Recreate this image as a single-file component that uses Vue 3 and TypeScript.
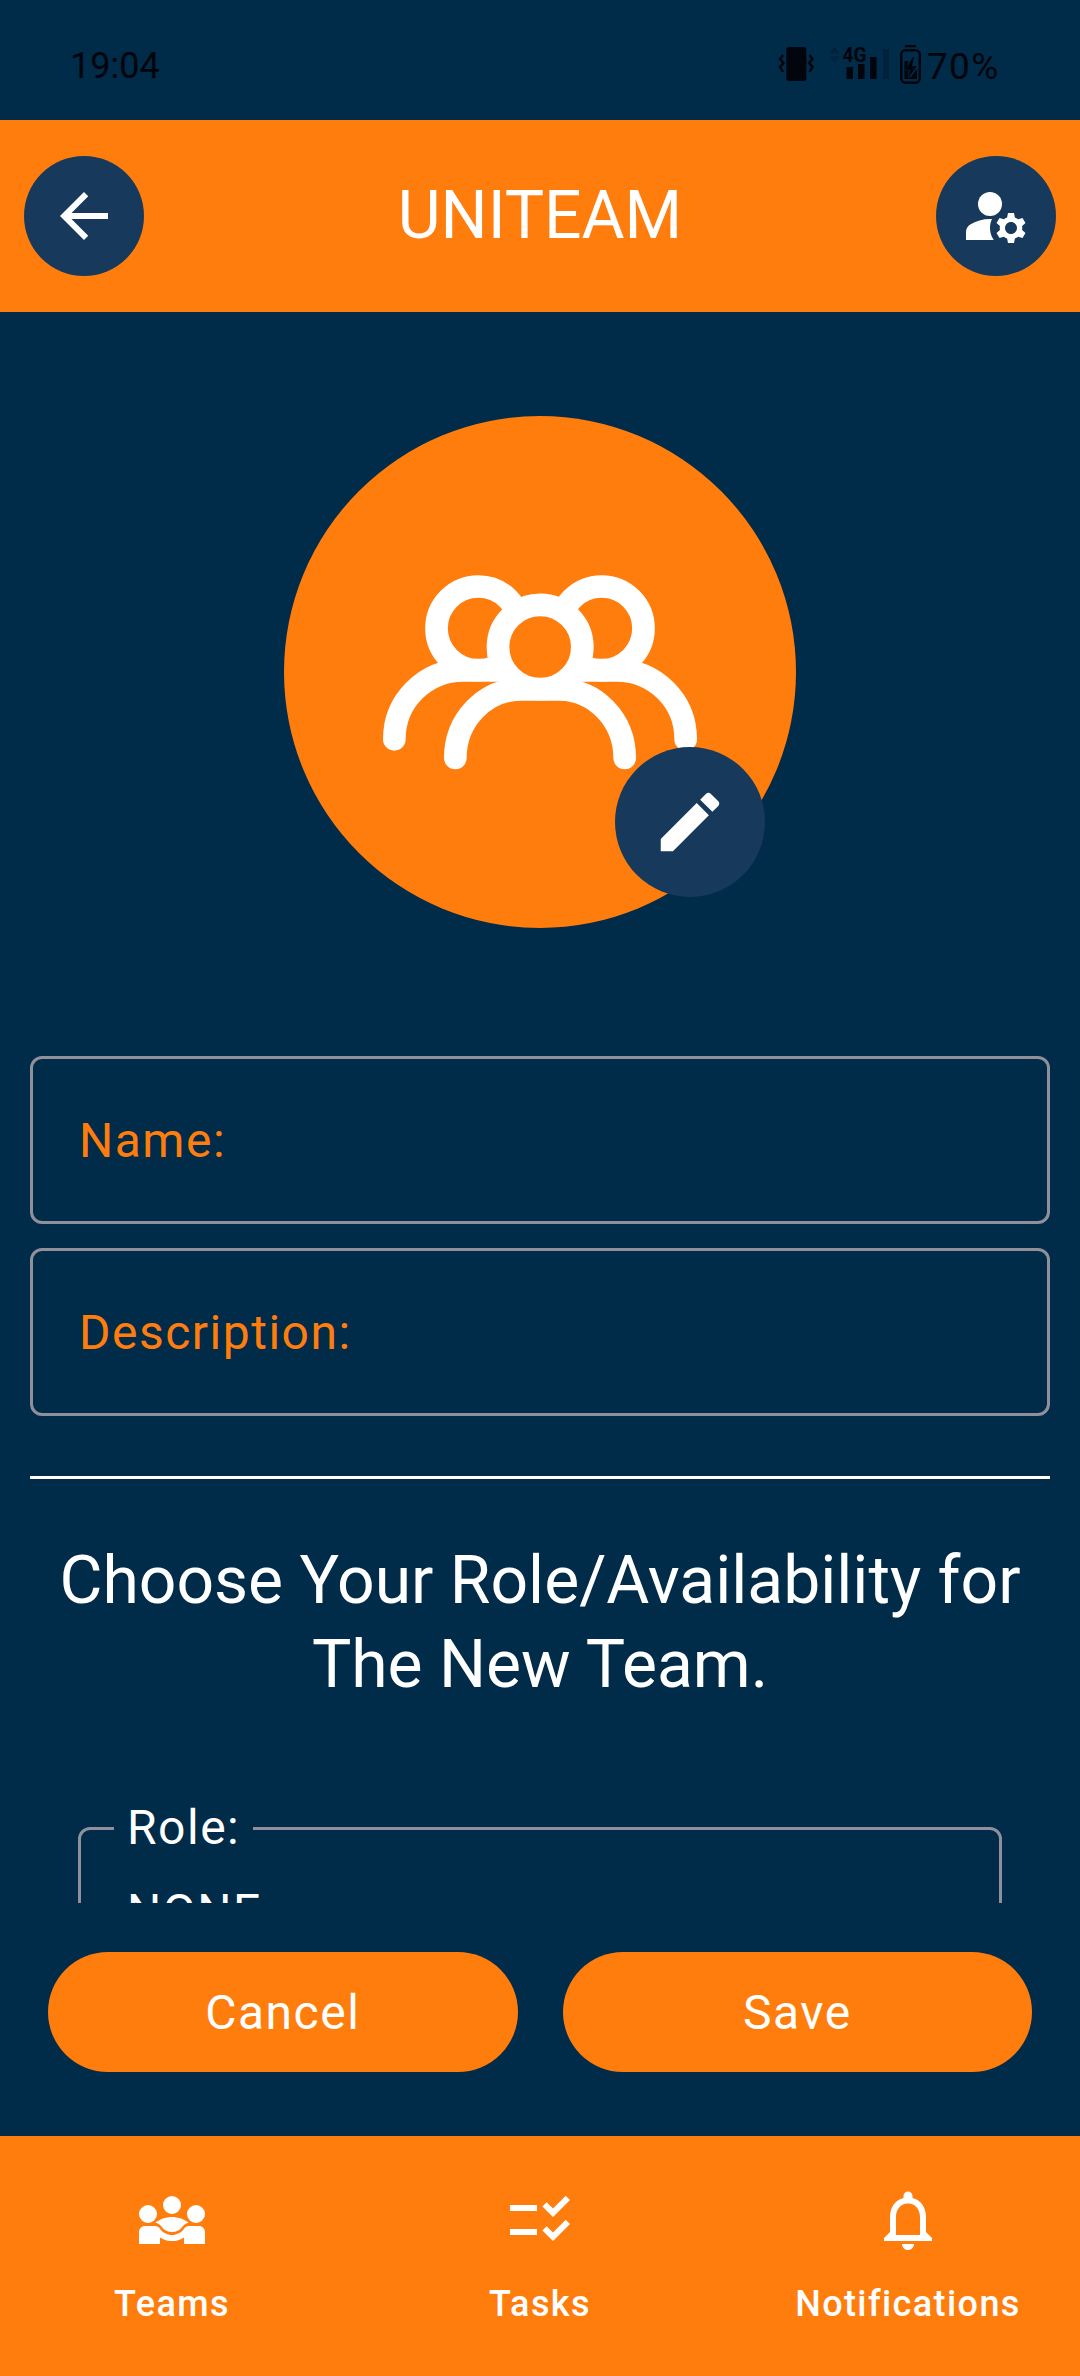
<script setup lang="ts">
interface NavItem {
  label: string
  paths: string[]
}

const fields: string[] = ['Name:', 'Description:']

const navItems: NavItem[] = [
  {
    label: 'Teams',
    paths: [
      'M12 4a3 3 0 1 0 0 6a3 3 0 1 0 0-6z',
      'M4 7a3 3 0 1 0 0 6a3 3 0 1 0 0-6z',
      'M20 7a3 3 0 1 0 0 6a3 3 0 1 0 0-6z',
      'M6.4 12.9C7.9 11.8 9.9 11 12 11s4.1.8 5.6 1.9c-1 .2-1.7.7-2.2 1.4C14.6 15.4 13.4 16 12 16s-2.6-.6-3.4-1.7C8.1 13.6 7.4 13.1 6.4 12.9z',
      'M1 20v-4c0-1.1.9-2 2-2h3.3c.7 0 1.3.3 1.7.9C8.9 16.2 10.4 17 12 17s3.1-.8 4-2.1c.4-.6 1-.9 1.7-.9H21c1.1 0 2 .9 2 2v4h-7v-2.2c-1.2.8-2.6 1.2-4 1.2s-2.8-.4-4-1.2V20z',
    ],
  },
  {
    label: 'Tasks',
    paths: [
      'M11 7H2v2h9V7zM11 15H2v2h9v-2zM16.34 11l-3.54-3.54 1.41-1.41 2.12 2.12 4.24-4.24L22 5.34 16.34 11zM16.34 19l-3.54-3.54 1.41-1.41 2.12 2.12 4.24-4.24L22 13.34 16.34 19z',
    ],
  },
  {
    label: 'Notifications',
    paths: [
      'M12 22c1.1 0 2-.9 2-2h-4c0 1.1.9 2 2 2zm6-6v-5c0-3.07-1.63-5.64-4.5-6.32V4c0-.83-.67-1.5-1.5-1.5s-1.5.67-1.5 1.5v.68C7.64 5.36 6 7.92 6 11v5l-2 2v1h16v-1l-2-2zm-2 1H8v-6c0-2.48 1.51-4.5 4-4.5s4 2.02 4 4.5v6z',
    ],
  },
]
</script>

<template>
  <div class="screen">
    <div class="status">
      <span class="time">19:04</span>
      <svg class="indicators" width="150" height="48" viewBox="776 42 150 48">
        <rect x="786.3" y="47" width="20" height="34" rx="3" />
        <path class="line" d="M783 55l-3 4 3.5 4-3.5 4 3 5M809.5 55l3 4-3.5 4 3.5 4-3 5" />
        <path class="faint" d="M834.5 47l5 6.5h-10zM834.5 63l5-6.5h-10zM883 49h6v30h-6z" />
        <text x="842.5" y="62" textLength="24" lengthAdjust="spacingAndGlyphs">4G</text>
        <path d="M846.5 67h6.5v12h-6.5zM858 64h6.5v15H858zM870 57h6.5v22H870zM905 45h11v2.2h-11z" />
        <rect class="line" x="901.2" y="50.2" width="18.6" height="32.6" rx="4.5" />
        <path d="M904.5 61h4l-3 9.5h3.500l-1 3 2 4.500 7-9V79h-12.500zM913 57l-8 13h5l-2 8 9-12h-5l2-9z" />
      </svg>
      <span class="battery">70%</span>
    </div>

    <header class="topbar">
      <button class="round" aria-label="Back">
        <svg width="72" height="72" viewBox="0 0 24 24"><path d="M20 11H7.83l5.59-5.59L12 4l-8 8 8 8 1.41-1.41L7.83 13H20v-2z" /></svg>
      </button>
      <h1>UNITEAM</h1>
      <button class="round" aria-label="Account settings">
        <svg width="72" height="72" viewBox="0 0 24 24">
          <circle cx="10" cy="8" r="4" />
          <path d="M10.67 13.02C10.45 13.01 10.23 13 10 13c-2.42 0-4.68.67-6.61 1.82C2.51 15.34 2 16.32 2 17.35V20h9.26C10.47 18.87 10 17.49 10 16c0-1.07.25-2.07.67-2.98z" />
          <path d="M20.75 16c0-.22-.03-.42-.06-.63l1.14-1.01-1-1.73-1.45.49c-.32-.27-.68-.48-1.08-.63L18 11h-2l-.3 1.49c-.4.15-.76.36-1.08.63l-1.45-.49-1 1.73 1.14 1.01c-.03.21-.06.41-.06.63s.03.42.06.63l-1.14 1.01 1 1.73 1.45-.49c.32.27.68.48 1.08.63L16 21h2l.3-1.49c.4-.15.76-.36 1.08-.63l1.45.49 1-1.73-1.14-1.01c.03-.21.06-.41.06-.63zM17 18c-1.1 0-2-.9-2-2s.9-2 2-2 2 .9 2 2-.9 2-2 2z" />
        </svg>
      </button>
    </header>

    <main class="content">
      <div class="avatar">
        <svg width="360" height="260" viewBox="0 0 1080 780" class="people">
          <circle cx="355" cy="265" r="125.5" />
          <circle cx="725" cy="265" r="125.5" />
          <path d="M103 598C103 482 196 391 310 391H440M977 598C977 482 884 391 770 391H640" />
          <circle class="front" cx="540.5" cy="321" r="126.5" />
          <path d="M286 654C286 540 374 450 480 448H600C706 450 794 540 794 654" />
        </svg>
        <button class="edit" aria-label="Edit picture">
          <svg width="78" height="78" viewBox="0 0 24 24"><path d="M3 17.25V21h3.75L17.81 9.94l-3.75-3.75L3 17.25zM20.71 7.04c.39-.39.39-1.02 0-1.41l-2.34-2.34c-.39-.39-1.02-.39-1.41 0l-1.83 1.83 3.75 3.75 1.83-1.83z" /></svg>
        </button>
      </div>

      <div v-for="field in fields" :key="field" class="field">{{ field }}</div>

      <hr />

      <h2>Choose Your Role/Availability for<br />The New Team.</h2>

      <fieldset class="role">
        <legend>Role:</legend>
        <div class="value">NONE</div>
      </fieldset>
    </main>

    <div class="actions">
      <button>Cancel</button>
      <button>Save</button>
    </div>

    <nav class="nav">
      <a v-for="item in navItems" :key="item.label">
        <svg width="72" height="72" viewBox="0 0 24 24">
          <path v-for="d in item.paths" :key="d" :d="d" />
        </svg>
        <span>{{ item.label }}</span>
      </a>
    </nav>
  </div>
</template>

<style>
body {
  margin: 0;
  background: #002b49;
}
</style>

<style scoped>
.screen {
  width: 1080px;
  height: 2376px;
  display: flex;
  flex-direction: column;
  overflow: hidden;
  background: #002b49;
  color: #fff;
  font-family: Roboto, sans-serif;
}
button {
  border: 0;
  padding: 0;
  color: inherit;
  font: inherit;
}
svg {
  display: block;
  fill: #fff;
}
.status {
  flex: none;
  height: 120px;
  box-sizing: border-box;
  padding: 12px 80px 0 70px;
  display: flex;
  align-items: center;
  color: #02050b;
  font-size: 36px;
}
.status svg {
  fill: #02050b;
}
.time {
  flex: 1;
}
.battery {
  width: 73px;
  margin-left: 1px;
  font-size: 37px;
  letter-spacing: 1.3px;
  white-space: nowrap;
}
.indicators text {
  font: 700 21px Roboto, sans-serif;
}
.indicators .line {
  fill: none;
  stroke: #02050b;
  stroke-width: 2.4;
}
.indicators .faint {
  fill: #00223d;
}
.topbar {
  flex: none;
  height: 192px;
  box-sizing: border-box;
  padding: 0 24px;
  display: flex;
  align-items: center;
  justify-content: space-between;
  background: #ff7d0d;
}
h1,
h2 {
  margin: 0;
  font-weight: 400;
  font-size: 66px;
  line-height: 84px;
}
.round,
.edit {
  display: flex;
  align-items: center;
  justify-content: center;
  border-radius: 50%;
  background: #17395b;
}
.round {
  width: 120px;
  height: 120px;
}
.content {
  flex: none;
  height: 1591px;
  box-sizing: border-box;
  padding: 104px 30px 0;
  overflow: hidden;
}
.avatar {
  position: relative;
  width: 512px;
  height: 512px;
  margin: 0 auto 128px;
  display: flex;
  justify-content: center;
  border-radius: 50%;
  background: #ff7d0d;
}
.people {
  margin-top: 124px;
  fill: none;
  stroke: #fff;
  stroke-width: 68;
  stroke-linecap: round;
}
.people .front {
  fill: #ff7d0d;
}
.edit {
  position: absolute;
  right: 31px;
  bottom: 31px;
  width: 150px;
  height: 150px;
}
.field {
  height: 168px;
  box-sizing: border-box;
  margin-bottom: 24px;
  padding-left: 46px;
  display: flex;
  align-items: center;
  border: 3px solid #8f909a;
  border-radius: 12px;
  color: #ff7d0d;
  font-size: 48px;
  letter-spacing: 1.5px;
}
hr {
  height: 3px;
  margin: 60px 0;
  border: 0;
  background: #fff;
}
h2 {
  text-align: center;
}
.role {
  height: 200px;
  margin: 91px 48px 0;
  padding: 0 45px 0 33px;
  border: 3px solid #8f909a;
  border-radius: 12px;
  font-size: 48px;
  letter-spacing: 1.5px;
}
.role legend {
  padding: 0 13px;
  line-height: 60px;
}
.value {
  padding: 24px 0 0 13px;
  line-height: 60px;
}
.actions {
  flex: none;
  height: 233px;
  box-sizing: border-box;
  padding: 49px 48px 0;
  display: flex;
  gap: 45px;
}
.actions button {
  flex: 1;
  height: 120px;
  border-radius: 60px;
  background: #ff7d0d;
  font-size: 48px;
  letter-spacing: 1.5px;
}
.nav {
  flex: none;
  height: 240px;
  box-sizing: border-box;
  padding-top: 48px;
  display: flex;
  gap: 24px;
  background: #ff7d0d;
}
.nav a {
  flex: 1 1 0;
  display: flex;
  flex-direction: column;
  align-items: center;
  gap: 24px;
  font-size: 36px;
  font-weight: 500;
  line-height: 48px;
  letter-spacing: 1.4px;
}
</style>
